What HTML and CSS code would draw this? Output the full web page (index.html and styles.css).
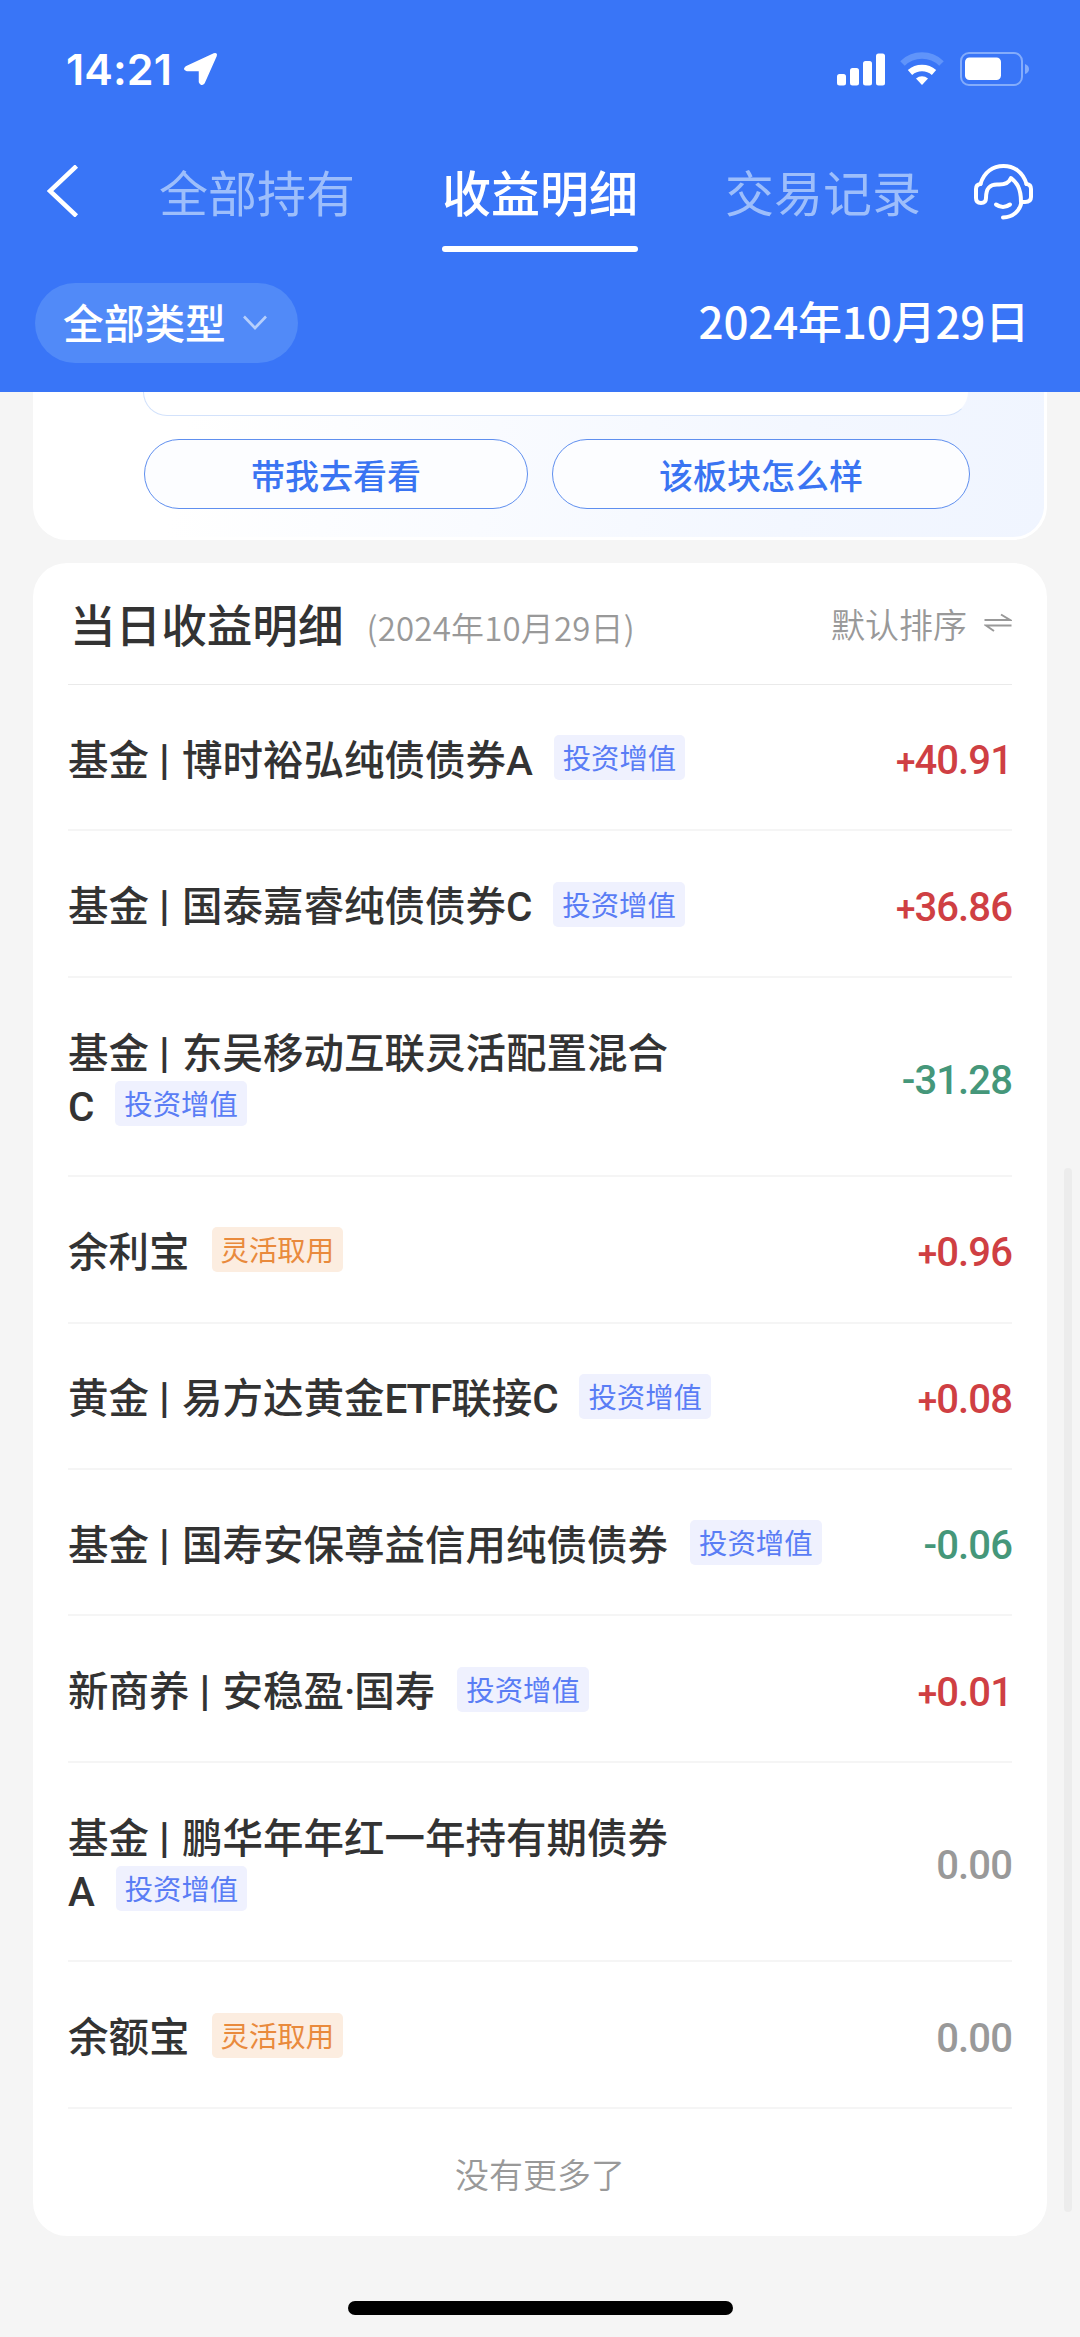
FILE: index.html
```html
<!DOCTYPE html>
<html lang="zh-CN">
<head>
  <meta charset="UTF-8">
  <meta name="viewport" content="width=device-width, initial-scale=1.0">
  <title>收益明细</title>
  <link rel="stylesheet" href="styles.css">
</head>
<body>
  <header class="header">
    <div class="status-bar">
      <span class="time">14:21</span>
      <svg class="location" width="36" height="36" viewBox="0 0 36 36">
        <path d="M3 16 L31 3 Q34 2 33 5 L21 32 Q18 35 16.500 31 V19.500 H4 Q0 18.500 3 16 Z" fill="#fff" stroke="#fff" stroke-width="1.500" stroke-linejoin="round"/>
      </svg>
      <svg class="signal" width="48" height="33" viewBox="0 0 48 33" fill="#fff">
        <rect x="0" y="21" width="9" height="11.500" rx="2.500"/>
        <rect x="13" y="15" width="9" height="17.500" rx="2.500"/>
        <rect x="26" y="8" width="9" height="24.500" rx="2.500"/>
        <rect x="39" y="0.500" width="9" height="32" rx="2.500"/>
      </svg>
      <svg class="wifi" width="44" height="34" viewBox="0 0 44 34" fill="none">
        <path d="M2.500 11.500 A28 28 0 0 1 41.500 11.500" stroke="#6094fa" stroke-width="6.500"/>
        <path d="M10 20.500 A18 18 0 0 1 34 20.500" stroke="#fff" stroke-width="6.500"/>
        <path d="M16 26.500 A9.500 9.500 0 0 1 28 26.500 L22 33 Z" fill="#fff"/>
      </svg>
      <svg class="battery" width="70" height="34" viewBox="0 0 70 34">
        <rect x="1" y="1" width="61" height="32" rx="8" fill="none" stroke="#84acfb" stroke-width="2"/>
        <rect x="5" y="5.500" width="36" height="22.500" rx="4.500" fill="#fff"/>
        <path d="M65 12 Q69 13.500 69 17 Q69 20.500 65 22 Z" fill="#84acfb"/>
      </svg>
    </div>

    <nav class="nav">
      <svg class="back" width="32" height="52" viewBox="0 0 32 52">
        <path d="M29.500 1 L3 26 L29.500 51" fill="none" stroke="#fff" stroke-width="4.500"/>
      </svg>
      <div class="tabs">
        <a class="tab">全部持有</a>
        <a class="tab active">收益明细</a>
        <a class="tab">交易记录</a>
      </div>
      <svg class="service" width="60" height="56" viewBox="0 0 60 56" fill="none" stroke="#fff" stroke-width="4" stroke-linecap="round" stroke-linejoin="round">
        <path d="M6.500 20 C10 8 19 2 29.500 2 C40 2 49 8 52.500 20"/>
        <path d="M6.500 20 Q2 20.500 2 25 V34 Q2 39 7 39 Q12 39 12 34 C12 24 16 20.500 23 20.500 C30 21 35 19 37 14 C42 18 47 23 47 38 H51 Q57 38 57 33 V25 Q57 20.500 52.500 20"/>
        <path d="M47.500 38 C46 47 39 53 29 53.500"/>
        <path d="M22 40.500 Q29 45.500 36 40.500"/>
      </svg>
    </nav>

    <div class="filter">
      <div class="type">
        <span>全部类型</span>
        <svg width="24" height="16" viewBox="0 0 24 16">
          <path d="M1 1.500 L12 13 L23 1.500" fill="none" stroke="#b6cffc" stroke-width="2.600"/>
        </svg>
      </div>
      <div class="date">2024年10月29日</div>
    </div>
  </header>

  <section class="card tips">
    <div class="bubble"></div>
    <div class="tips-buttons">
      <a class="tips-btn">带我去看看</a>
      <a class="tips-btn wide">该板块怎么样</a>
    </div>
  </section>

  <section class="card detail">
    <div class="detail-head">
      <h2>当日收益明细</h2>
      <span class="day">(2024年10月29日)</span>
      <span class="sort">默认排序</span>
      <svg width="28" height="20" viewBox="0 0 28 20" fill="none" stroke="#999" stroke-width="2">
        <path d="M0.500 7 H26 L17 1.500"/>
        <path d="M27.500 12.500 H2 L10 18"/>
      </svg>
    </div>

    <ul class="list">
      <li class="row">
        <div class="name">基金<i>|</i>博时裕弘纯债债券<b>A</b><span class="tag">投资增值</span></div>
        <div class="amount up">+40.91</div>
      </li>
      <li class="row">
        <div class="name">基金<i>|</i>国泰嘉睿纯债债券<b>C</b><span class="tag">投资增值</span></div>
        <div class="amount up">+36.86</div>
      </li>
      <li class="row double">
        <div class="name">基金<i>|</i>东吴移动互联灵活配置混合<br><b>C</b><span class="tag">投资增值</span></div>
        <div class="amount down">-31.28</div>
      </li>
      <li class="row">
        <div class="name">余利宝<span class="tag orange">灵活取用</span></div>
        <div class="amount up">+0.96</div>
      </li>
      <li class="row">
        <div class="name">黄金<i>|</i>易方达黄金<b>ETF</b>联接<b>C</b><span class="tag">投资增值</span></div>
        <div class="amount up">+0.08</div>
      </li>
      <li class="row">
        <div class="name">基金<i>|</i>国寿安保尊益信用纯债债券<span class="tag">投资增值</span></div>
        <div class="amount down">-0.06</div>
      </li>
      <li class="row">
        <div class="name">新商养<i>|</i>安稳盈<b>·</b>国寿<span class="tag">投资增值</span></div>
        <div class="amount up">+0.01</div>
      </li>
      <li class="row double">
        <div class="name">基金<i>|</i>鹏华年年红一年持有期债券<br><b>A</b><span class="tag">投资增值</span></div>
        <div class="amount">0.00</div>
      </li>
      <li class="row">
        <div class="name">余额宝<span class="tag orange">灵活取用</span></div>
        <div class="amount">0.00</div>
      </li>
    </ul>
    <p class="no-more">没有更多了</p>
  </section>

  <div class="scrollbar"></div>
  <div class="home-bar"></div>
</body>
</html>
```
FILE: styles.css
```css
* {
  box-sizing: border-box;
}
body {
  position: relative;
  margin: 0;
  width: 1080px;
  height: 2337px;
  overflow: hidden;
  background-color: #f5f5f5;
  color: #333;
  font-family: 'Noto Sans CJK SC', sans-serif;
}
svg {
  display: block;
  flex: none;
}

/* header */
.header {
  height: 392px;
  background-color: #3975f7;
  color: #fff;
}
.status-bar {
  display: flex;
  align-items: center;
  height: 138px;
  padding: 0 50px 0 66px;
}
.time {
  width: 117px;
  font-family: Inter, sans-serif;
  font-size: 43px;
  font-weight: 600;
  letter-spacing: 0.1px;
  white-space: nowrap;
}
.signal {
  margin-left: auto;
}
.wifi {
  margin: 0 16px 0 15px;
}
.nav {
  display: flex;
  align-items: flex-start;
  height: 145px;
  padding: 0 46px 0 47px;
}
.back {
  margin-top: 27px;
}
.tabs {
  display: flex;
  gap: 87px;
  margin-left: 80px;
}
.tab {
  height: 114px;
  font-size: 49px;
  line-height: 106px;
  font-weight: 400;
  color: #9dbefb;
}
.tab.active {
  position: relative;
  color: #fff;
  font-weight: 500;
}
.tab.active::after {
  content: '';
  position: absolute;
  left: 0;
  bottom: 0;
  width: 100%;
  height: 6px;
  border-radius: 3px;
  background-color: #fff;
}
.service {
  margin: 26px 0 0 auto;
}
.filter {
  display: flex;
  justify-content: space-between;
  align-items: center;
  height: 80px;
  padding: 0 51px 0 35px;
}
.type {
  display: flex;
  align-items: center;
  gap: 17px;
  width: 263px;
  height: 80px;
  padding-left: 28px;
  border-radius: 40px;
  background-color: #518af8;
  font-size: 40.7px;
  font-weight: 500;
}
.type span {
  line-height: 40px;
  padding-bottom: 2px;
}
.date {
  font-size: 44px;
  line-height: 74px;
  padding-bottom: 6px;
  font-weight: 500;
  letter-spacing: -0.2px;
}

/* cards */
.card {
  width: 1014px;
  margin-left: 33px;
  background-color: #fff;
}
.tips {
  height: 148px;
  border: 3px solid #fff;
  border-top: none;
  border-radius: 0 0 34px 34px;
  background: linear-gradient(100deg, #fff 15%, #f3f7ff 75%, #f0f5ff);
}
.bubble {
  width: 826px;
  height: 24px;
  margin-left: 107px;
  border: 1px solid #d3e2fb;
  border-top: none;
  border-right-color: #f2f6ff;
  border-radius: 0 0 24px 24px;
  background-color: #fff;
}
.tips-buttons {
  display: flex;
  gap: 24px;
  margin: 23px 0 0 108px;
}
.tips-btn {
  width: 384px;
  height: 70px;
  border: 1px solid #5f8fef;
  border-radius: 35px;
  background-color: #fcfdff;
  color: #3a74f2;
  font-size: 34px;
  line-height: 69px;
  font-weight: 500;
  text-align: center;
}
.tips-btn.wide {
  width: 418px;
}

.detail {
  height: 1673px;
  margin-top: 23px;
  padding: 0 35px;
  border-radius: 34px;
}
.detail-head {
  display: flex;
  align-items: center;
  height: 122px;
  padding: 0 0 1px 2px;
  border-bottom: 1px solid #eaeaea;
  color: #999;
}
h2 {
  margin: 0;
  color: #333;
  font-size: 45.6px;
  font-weight: 500;
}
.day {
  margin: 8px 0 0 23px;
  font-size: 33px;
  font-weight: 350;
  letter-spacing: 0.2px;
}
.sort {
  margin: 0 17px 0 auto;
  font-size: 34px;
  font-weight: 350;
}

.list {
  margin: 0;
  padding: 0;
  list-style: none;
}
.row {
  display: flex;
  justify-content: space-between;
  align-items: center;
  height: 146.4px;
  border-bottom: 2px solid #f5f5f5;
}
.row.double {
  height: 199.5px;
}
.name {
  font-size: 40.5px;
  line-height: 53px;
  font-weight: 500;
  white-space: nowrap;
}
.name b {
  font-family: Roboto, sans-serif;
  font-weight: 500;
  letter-spacing: -1.2px;
  line-height: 1;
}
.name i {
  display: inline-block;
  width: 33px;
  padding-right: 2px;
  font-family: Inter, sans-serif;
  font-size: 30px;
  font-style: normal;
  font-weight: 600;
  line-height: 30px;
  text-align: center;
  vertical-align: 2px;
}
.tag {
  display: inline-block;
  height: 45px;
  margin: -8px 0 -8px 22px;
  padding: 0 9px;
  border-radius: 5px;
  background-color: #eff1fe;
  color: #5a7df5;
  font-size: 28.4px;
  line-height: 44px;
  font-weight: 400;
  vertical-align: 5.5px;
}
.tag.orange {
  background-color: #fcede0;
  color: #e98a3c;
}
.amount {
  padding-top: 7px;
  color: #999;
  font-family: Roboto, sans-serif;
  font-size: 40px;
  font-weight: 500;
  letter-spacing: -0.9px;
}
.amount.up {
  color: #cf3f43;
}
.amount.up::first-letter {
  font-size: 35px;
}
.amount.down {
  color: #45977a;
}
.no-more {
  margin: 0;
  color: #999;
  font-size: 34px;
  line-height: 129px;
  font-weight: 350;
  text-align: center;
}

/* overlays */
.scrollbar {
  position: absolute;
  top: 1168px;
  right: 8px;
  width: 8px;
  height: 1044px;
  border-radius: 4px;
  background-color: #ececec;
}
.home-bar {
  width: 385px;
  height: 14px;
  margin: 65px auto 0;
  border-radius: 7px;
  background-color: #000;
}
```
